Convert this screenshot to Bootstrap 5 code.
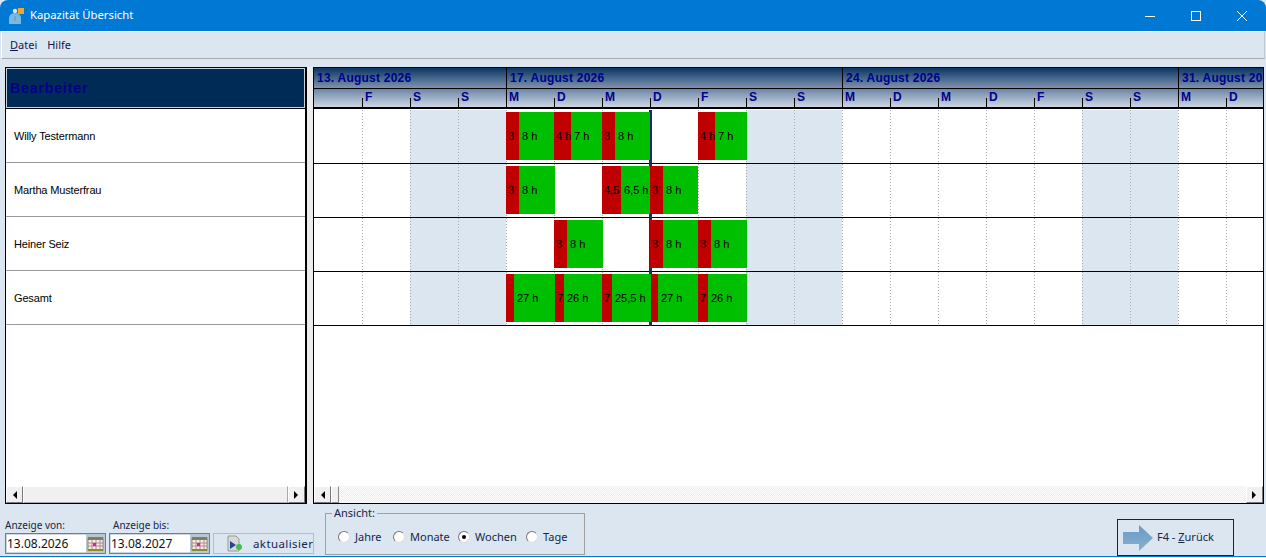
<!DOCTYPE html>
<html lang="de">
<head>
    <meta charset="UTF-8">
    <meta name="viewport" content="width=device-width, initial-scale=1">
    <title>Kapazität Übersicht</title>
    <link rel="stylesheet" href="https://cdn.jsdelivr.net/npm/bootstrap@5.3.0/dist/css/bootstrap.min.css">
    <style>
        html, body { height: 558px; overflow: hidden; }
        body { background: #dce6f0; font-family: "Noto Sans", sans-serif; color: #12263f; }
        .titel-leiste { height: 31px; background: #0078d4; color: #fff; font-size: 11.3px; padding-left: 9px; padding-right: 1px; flex: none; border-radius: 8px 8px 0 0; }
        .titel-knopf { width: 46px; height: 31px; }
        .menue-leiste { height: 28px; border-top: 1px solid #fff; border-bottom: 1px solid #aaa; border-left: 1px solid #fff; border-right: 1px solid #c0c8d0; margin-left: 1px; margin-right: 1px; padding-left: 8px; gap: 10px; font-size: 11px; color: #12184f; flex: none; }
        .haupt { height: 437px; margin-top: 8px; padding-left: 5px; padding-right: 2px; flex: none; }
        .panel-links { width: 302px; border: 1px solid #000; border-right: 2px solid #000; background: #fff; flex: none; }
        .trenner { width: 6px; background: #ececec; flex: none; }
        .panel-rechts { width: 951px; border: 1px solid #000; background: #fff; flex: none; overflow: hidden; }
        .kopf-links { height: 40px; margin-bottom: 1px; box-shadow: 0 1px 0 #000; background: #002b56; border: 1px solid #c8d0d8; color: #00008b; font: bold 14px "Liberation Sans", sans-serif; letter-spacing: .9px; padding: 0 0 0 3px; display: flex; align-items: center; flex: none; }
        .name-zeile { height: 54px; border-bottom: 1px solid #999; font: 11px "Liberation Sans", sans-serif; letter-spacing: -.15px; color: #000; padding-left: 8px; display: flex; align-items: center; flex: none; }
        .panel-fuell { flex: 1 1 auto; min-height: 0; }
        .kopf-woche { display: flex; height: 21px; background: linear-gradient(#0d3666, #7d93ae); border-bottom: 1px solid #000; flex: none; }
        .woche { flex: none; height: 20px; border-left: 1px solid #000; color: #00008b; font: bold 12px "Liberation Sans", sans-serif; letter-spacing: .23px; padding: 3px 0 0 3px; white-space: nowrap; overflow: hidden; }
        .woche:first-child { border-left: 0; }
        .kopf-tage { display: flex; height: 20px; background: linear-gradient(#6c86a6, #ccd6e2); border-bottom: 2px solid #000; flex: none; }
        .tag { flex: none; width: 48px; height: 18px; position: relative; color: #00008b; font: bold 12px "Liberation Sans", sans-serif; padding: 0 0 0 3px; line-height: 17px; }
        .tag::before { content: ""; position: absolute; left: 0; bottom: 0; height: 9px; width: 1px; background: #000; }
        .tag:first-child::before { display: none; }
        .tag.wochenstart::before { height: 18px; }
        .plan { flex: 1 1 auto; min-height: 0; position: relative; overflow: hidden; margin-top: 1px; }
        .plan-zeile { display: flex; height: 54px; border-bottom: 1px solid #000; }
        .zelle { flex: none; width: 48px; height: 53px; padding-top: 2px; display: flex; position: relative; }
        .zelle::before { content: ""; position: absolute; left: 0; top: 0; bottom: 0; width: 1px; background: repeating-linear-gradient(#aaa 0 1px, transparent 1px 3px); }
        .zelle:first-child::before { display: none; }
        .zelle.wochenende { background: #dce6f0; }
        .balken { height: 48px; font: 11px/48px "Liberation Sans", sans-serif; color: #000; overflow: hidden; white-space: nowrap; flex: none; padding-left: 2px; position: relative; z-index: 2; }
        .balken.rot { background: #c00000; }
        .balken.gruen { background: #00bf00; padding-left: 3px; }
        .heute { position: absolute; left: 335px; top: 0; width: 3px; height: 216px; background: #1b2a6b; z-index: 1; }
        .rollbalken { height: 17px; background: #f0f0f0; flex: none; display: flex; margin-top: auto; }
        .pfeil-knopf { width: 17px; height: 17px; flex: none; background: #f0f0f0; border: 1px solid; border-color: #fff #777 #777 #fff; display: flex; align-items: center; justify-content: center; }
        .griff { width: 8px; flex: none; background: #f0f0f0; border: 1px solid; border-color: #fff #888 #888 #fff; }
        .griff-lang { flex: 1 1 auto; background: #f0f0f0; border: 1px solid; border-color: #fff #aaa #aaa #fff; }
        .spur { flex: 1 1 auto; background: repeating-conic-gradient(#fff 0 25%, #ececec 0 50%) 0 0 / 2px 2px; }
        .fuss { flex: 1 1 auto; padding-left: 5px; position: relative; font-size: 10px; }
        .datum-block { margin-top: 14px; margin-right: 3px; width: 101px; }
        .datum-label { height: 15px; line-height: 14px; color: #12264f; white-space: nowrap; }
        .datum-feld { height: 21px; background: #fff; border: 1px solid #6f7f8f; box-shadow: inset 0 0 0 1px #cfd6dd; font-size: 12px; color: #111; padding-left: 1px; display: flex; align-items: center; justify-content: space-between; }
        .kalender-knopf { width: 19px; height: 19px; background: #b9c6d4; display: flex; align-items: center; justify-content: center; flex: none; }
        .kalender { width: 17px; height: 16px; flex: none; }
        .aktual { width: 101px; height: 21px; margin-top: 29px; border: 1px solid #a6c0dc; font-size: 11.5px; letter-spacing: .4px; color: #12264f; overflow: hidden; white-space: nowrap; display: flex; align-items: center; padding-left: 12px; gap: 10px; flex: none; }
        .aktual svg { flex: none; }
        .ansicht { width: 260px; height: 42px; margin: 9px 0 0 11px; border: 1px solid #a0a0a0; position: relative; padding: 6px 0 0 12px; display: grid; grid-template-columns: 55px 65px 68px auto; align-items: center; flex: none; font-size: 11px; }
        .ansicht-titel { position: absolute; left: 6px; top: -8px; background: #dce6f0; padding: 0 2px; line-height: 13px; color: #12264f; }
        .wahl { display: flex; align-items: center; gap: 5px; color: #12264f; }
        .kreis { width: 12px; height: 12px; border-radius: 50%; background: #fff; border: 1px solid; border-color: #777 #ddd #ddd #777; display: flex; align-items: center; justify-content: center; }
        .kreis.an::after { content: ""; width: 4px; height: 4px; border-radius: 50%; background: #000; }
        .zurueck { position: absolute; left: 1117px; top: 15px; width: 117px; height: 37px; border: 1px solid #002b56; font-size: 11px; color: #12264f; display: flex; align-items: center; padding-left: 5px; gap: 4px; }
        .fenster-rand { height: 2px; background: #0078d4; border-bottom: 1px solid #f4f7fa; flex: none; }
        .titel-text { margin-left: 5px; }
    </style>
</head>
<body class="d-flex flex-column">

    <div class="titel-leiste d-flex align-items-center">
        <svg width="16" height="18" viewBox="0 0 16 18"><rect x="9" y="1" width="6" height="6" fill="#f5a623"/><circle cx="6" cy="4" r="2.2" fill="#d8e8f5"/><path d="M0 17v-6a6 5 0 0 1 12 0v6z" fill="#7ab8e0"/><path d="M6 9v5" stroke="#5a98c8"/></svg>
        <span class="titel-text">Kapazität Übersicht</span>
        <div class="ms-auto d-flex">
            <div class="titel-knopf d-flex align-items-center justify-content-center"><svg width="12" height="12"><path d="M1 6.5h10" stroke="#fff"/></svg></div>
            <div class="titel-knopf d-flex align-items-center justify-content-center"><svg width="12" height="12"><rect x="1.5" y="1.5" width="9" height="9" fill="none" stroke="#fff"/></svg></div>
            <div class="titel-knopf d-flex align-items-center justify-content-center"><svg width="12" height="12"><path d="M1 1l10 10M11 1L1 11" stroke="#fff"/></svg></div>
        </div>
    </div>

    <div class="menue-leiste d-flex align-items-center">
        <span><u>D</u>atei</span>
        <span>Hilfe</span>
    </div>

    <div class="haupt d-flex">
        <div class="panel-links d-flex flex-column">
            <div class="kopf-links">Bearbeiter</div>
            <div class="name-zeile">Willy Testermann</div>
            <div class="name-zeile">Martha Musterfrau</div>
            <div class="name-zeile">Heiner Seiz</div>
            <div class="name-zeile">Gesamt</div>
            <div class="panel-fuell"></div>
            <div class="rollbalken">
                <div class="pfeil-knopf"><svg width="5" height="8"><path d="M5 0v8L1 4z"/></svg></div>
                <div class="griff-lang"></div>
                <div class="pfeil-knopf"><svg width="5" height="8"><path d="M0 0v8l4-4z"/></svg></div>
            </div>
        </div>
        <div class="trenner"></div>
        <div class="panel-rechts d-flex flex-column">
            <div class="kopf-woche" id="wochen"></div>
            <div class="kopf-tage" id="tage"></div>
            <div class="plan">
                <div id="zeilen"></div>
                <div class="heute"></div>
            </div>
            <div class="rollbalken">
                <div class="pfeil-knopf"><svg width="5" height="8"><path d="M5 0v8L1 4z"/></svg></div>
                <div class="griff"></div>
                <div class="spur"></div>
                <div class="pfeil-knopf"><svg width="5" height="8"><path d="M0 0v8l4-4z"/></svg></div>
            </div>
        </div>
    </div>

    <div class="fuss d-flex">
        <div class="datum-block">
            <div class="datum-label">Anzeige von:</div>
            <div class="datum-feld">13.08.2026
                <span class="kalender-knopf"><svg class="kalender" viewBox="0 0 17 16"><rect x="1" y="2" width="15" height="12" fill="#f8f4d0" stroke="#8a8a70"/><rect x="1" y="1" width="15" height="3" fill="#7a7f6a"/><path d="M5 4v9M9 4v9M13 4v9M1 7h15M1 10h15" stroke="#b080b0"/><rect x="6" y="7" width="3" height="3" fill="#e02090"/><rect x="1" y="13" width="15" height="2" fill="#8a8a30"/></svg></span>
            </div>
        </div>
        <div class="datum-block">
            <div class="datum-label ps-1">Anzeige bis:</div>
            <div class="datum-feld">13.08.2027
                <span class="kalender-knopf"><svg class="kalender" viewBox="0 0 17 16"><rect x="1" y="2" width="15" height="12" fill="#f8f4d0" stroke="#8a8a70"/><rect x="1" y="1" width="15" height="3" fill="#7a7f6a"/><path d="M5 4v9M9 4v9M13 4v9M1 7h15M1 10h15" stroke="#b080b0"/><rect x="6" y="7" width="3" height="3" fill="#e02090"/><rect x="1" y="13" width="15" height="2" fill="#8a8a30"/></svg></span>
            </div>
        </div>
        <div class="aktual">
            <svg width="17" height="17" viewBox="0 0 17 17"><path d="M2 1h8l3 3v12H2z" fill="#d8d8d8" stroke="#999"/><path d="M4 6l6 4-6 4z" fill="#1f4a8f"/><circle cx="13" cy="12" r="3" fill="#3fc04a"/></svg>
            <span>aktualisieren</span>
        </div>
        <div class="ansicht">
            <span class="ansicht-titel">Ansicht:</span>
            <label class="wahl"><span class="kreis"></span>Jahre</label>
            <label class="wahl"><span class="kreis"></span>Monate</label>
            <label class="wahl"><span class="kreis an"></span>Wochen</label>
            <label class="wahl"><span class="kreis"></span>Tage</label>
        </div>
        <div class="zurueck">
            <svg width="30" height="26" viewBox="0 0 30 26"><defs><linearGradient id="pfeil" x1="0" y1="0" x2="0" y2="1"><stop offset="0" stop-color="#6a9ac4"/><stop offset="1" stop-color="#88b0d0"/></linearGradient></defs><path d="M0 7h16V0l14 13-14 13v-7H0z" fill="url(#pfeil)"/></svg>
            <span>F4 - <u>Z</u>urück</span>
        </div>
    </div>
    <div class="fenster-rand"></div>

    <script>
        // Kopfzeilen: 20 Tage ab Donnerstag, 13. August 2026
        const tage = ['', 'F', 'S', 'S', 'M', 'D', 'M', 'D', 'F', 'S', 'S', 'M', 'D', 'M', 'D', 'F', 'S', 'S', 'M', 'D'];
        const wochen = [['13. August 2026', 192], ['17. August 2026', 336], ['24. August 2026', 336], ['31. August 2026', 86]];

        document.getElementById('wochen').innerHTML = wochen
            .map(w => `<div class="woche" style="width:${w[1]}px">${w[0]}</div>`).join('');

        document.getElementById('tage').innerHTML = tage.map((t, i) =>
            `<div class="tag${t === 'M' && tage[i - 1] === 'S' ? ' wochenstart' : ''}">${t}</div>`).join('');

        // Balken je Tag: [rot, Beschriftung, grün, Beschriftung, Versatz links]
        const zeilen = [
            { 4: [13, '3', 35, '8 h'], 5: [17, '4 h', 31, '7 h'], 6: [13, '3', 35, '8 h'], 8: [17, '4 h', 32, '7 h'] },
            { 4: [13, '3', 36, '8 h'], 6: [19, '4,5', 29, '6,5 h'], 7: [13, '3', 35, '8 h'] },
            { 5: [13, '3', 36, '8 h'], 7: [13, '3', 35, '8 h'], 8: [13, '3', 36, '8 h'] },
            { 4: [8, '', 41, '27 h'], 5: [9, '7', 38, '26 h', 1], 6: [10, '7', 39, '25,5 h'], 7: [7, '', 40, '27 h', 1], 8: [10, '7', 39, '26 h'] }
        ];

        document.getElementById('zeilen').innerHTML = zeilen.map(z => {
            const zellen = tage.map((t, i) => {
                const b = z[i];
                const balken = b ? `<div class="balken rot" style="width:${b[0]}px;margin-left:${b[4] || 0}px">${b[1]}</div><div class="balken gruen" style="width:${b[2]}px">${b[3]}</div>` : '';
                return `<div class="zelle${t === 'S' ? ' wochenende' : ''}">${balken}</div>`;
            }).join('');
            return `<div class="plan-zeile">${zellen}</div>`;
        }).join('');
    </script>

    <script src="https://cdn.jsdelivr.net/npm/bootstrap@5.3.0/dist/js/bootstrap.bundle.min.js"></script>
</body>
</html>
